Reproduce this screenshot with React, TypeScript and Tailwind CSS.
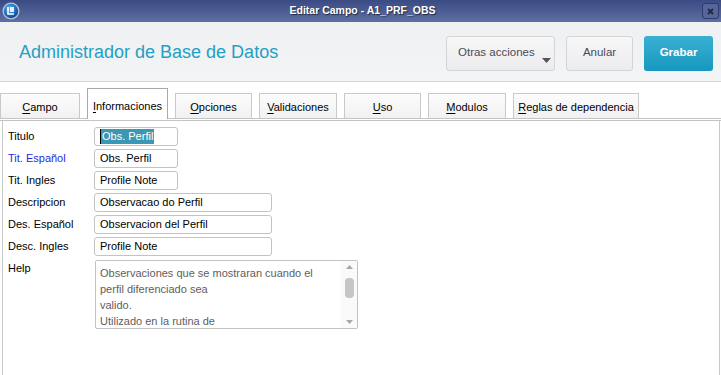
import React from "react";

const U = ({ t }: { t: string }) => (
  <span className="whitespace-nowrap">
    <span className="underline underline-offset-2">{t[0]}</span>
    {t.slice(1)}
  </span>
);

const tabs = [
  { k: "Campo", w: "w-[80px]" },
  { k: "Informaciones", w: "w-[81px]", active: true },
  { k: "Opciones", w: "w-[77px]" },
  { k: "Validaciones", w: "w-[78px]" },
  { k: "Uso", w: "w-[77px]" },
  { k: "Modulos", w: "w-[78px]" },
  { k: "Reglas de dependencia", w: "w-[126px]" },
];

const rows = [
  { l: "Titulo", v: "Obs. Perfil", w: "w-[84px]", sel: true },
  { l: "Tit. Español", v: "Obs. Perfil", w: "w-[84px]", blue: true },
  { l: "Tit. Ingles", v: "Profile Note", w: "w-[84px]" },
  { l: "Descripcion", v: "Observacao do Perfil", w: "w-[178px]" },
  { l: "Des. Español", v: "Observacion del Perfil", w: "w-[178px]" },
  { l: "Desc. Ingles", v: "Profile Note", w: "w-[178px]" },
];

export default function App() {
  return (
    <div
      className="w-[721px] h-[375px] overflow-hidden bg-white flex flex-col text-[11px] text-black"
      style={{ fontFamily: '"Liberation Sans", Arial, sans-serif' }}
    >
      {/* title bar */}
      <div className="h-[22px] shrink-0 flex items-center justify-between px-[2px] bg-gradient-to-b from-[#3a4b84] to-[#5f6fa3]">
        <svg width="18" height="18" viewBox="0 0 18 18">
          <defs>
            <radialGradient id="g1" cx="40%" cy="35%" r="70%">
              <stop offset="0%" stopColor="#6fb6f0" />
              <stop offset="60%" stopColor="#1d6fc0" />
              <stop offset="100%" stopColor="#0c3f86" />
            </radialGradient>
          </defs>
          <circle cx="9" cy="9" r="8.5" fill="#b9c4d8" />
          <circle cx="9" cy="9" r="7.2" fill="url(#g1)" />
          <path d="M6 5 L6 12 L12 12" stroke="#ffffff" strokeWidth="1.6" fill="none" />
          <rect x="8" y="5" width="4" height="5" fill="#ffffff" opacity="0.85" />
        </svg>
        <div className="text-white font-bold text-[10.5px] [text-shadow:1px_1px_1px_rgba(0,0,0,0.6)] ml-[3px]">
          Editar Campo - A1_PRF_OBS
        </div>
        <div className="w-[17px] h-[16px] rounded-[3px] border border-[#2e3c6a] bg-[#56659a] flex items-center justify-center">
          <svg width="7" height="7" viewBox="0 0 7 7">
            <path d="M1 1 L6 6 M6 1 L1 6" stroke="#1e2848" strokeWidth="1.8" />
          </svg>
        </div>
      </div>

      {/* header */}
      <div className="h-[60px] shrink-0 flex items-center justify-between bg-gradient-to-b from-[#eef0f2] to-[#f3f4f5] border-b border-[#d6d7d9] pl-[19px] pr-[8px]">
        <div className="text-[18px] text-[#1fa0c6] mt-[1px]">Administrador de Base de Datos</div>
        <div className="flex items-center gap-[11px] mt-[3px]">
          <div className="relative w-[109px] h-[35px] rounded-[3px] border border-[#d3d4d6] bg-gradient-to-b from-[#f7f7f8] to-[#ececee] flex items-center pl-[11px] text-[11.5px] text-[#4a4a55]">
            Otras acciones
            <svg className="absolute right-[3px] bottom-[7px]" width="9" height="5" viewBox="0 0 9 5">
              <path d="M0 0 L9 0 L4.5 5 Z" fill="#555" />
            </svg>
          </div>
          <div className="w-[67px] h-[35px] rounded-[3px] border border-[#d3d4d6] bg-gradient-to-b from-[#f7f7f8] to-[#ececee] flex items-center justify-center text-[11.5px] text-[#4a4a55]">
            Anular
          </div>
          <div className="w-[69px] h-[35px] rounded-[3px] bg-gradient-to-b from-[#39b0d2] to-[#1498bf] flex items-center justify-center text-white text-[11.5px] font-bold">
            Grabar
          </div>
        </div>
      </div>

      {/* tabs */}
      <div className="h-[36px] shrink-0 flex items-end gap-[7px] pl-0 relative">
        {tabs.map((t) =>
          t.active ? (
            <div
              key={t.k}
              className={`${t.w} h-[31px] border border-[#a9a9a9] border-b-0 bg-white flex items-start justify-center pt-[9px] relative z-10 -mb-[1px]`}
            >
              <U t={t.k} />
            </div>
          ) : (
            <div
              key={t.k}
              className={`${t.w} h-[25px] border border-[#c9c9c9] border-b-0 bg-gradient-to-b from-[#fcfcfc] to-[#f1f1f1] flex items-center justify-center pt-[2px]`}
            >
              <U t={t.k} />
            </div>
          )
        )}
      </div>

      {/* content panel */}
      <div className="flex-1 border-t-[3px] border-double border-[#c4c4c4]">
        <div className="h-full ml-[2px] mr-[1px] border-l border-r border-[#c9c9c9] pt-[6px] pl-[5px]">
          <div className="flex flex-col gap-[3px]">
            {rows.map((r) => (
              <div key={r.l} className="flex items-center h-[19px]">
                <div className={`w-[86px] ${r.blue ? "text-[#2a2ae0]" : "text-black"}`}>{r.l}</div>
                <div
                  className={`${r.w} h-[19px] border border-[#c3c3c3] rounded-[3px] bg-white flex items-center pl-[5px]`}
                >
                  {r.sel ? (
                    <span className="bg-[#3b98b4] text-white pl-[1px] pr-[1px] leading-[15px] border-l border-black">
                      {r.v}
                    </span>
                  ) : (
                    r.v
                  )}
                </div>
              </div>
            ))}
            <div className="flex items-start mt-[1px]">
              <div className="w-[87px]">Help</div>
              <div className="w-[263px] h-[69px] border border-[#c3c3c3] rounded-[2px] bg-white flex">
                <div className="flex-1 pl-[4px] pt-[4px] text-[#5e5e5e] leading-[16px]">
                  Observaciones que se mostraran cuando el
                  <br />
                  perfil diferenciado sea
                  <br />
                  valido.
                  <br />
                  Utilizado en la rutina de
                </div>
                <div className="w-[16px] flex flex-col items-center justify-between py-[4px] bg-[#fafafa]">
                  <svg width="7" height="4" viewBox="0 0 7 4">
                    <path d="M0 4 L7 4 L3.5 0 Z" fill="#a8a8a8" />
                  </svg>
                  <div className="w-[9px] h-[20px] rounded-[4px] bg-[#c6c6c6] -mt-[14px]" />
                  <svg width="7" height="4" viewBox="0 0 7 4">
                    <path d="M0 0 L7 0 L3.5 4 Z" fill="#a8a8a8" />
                  </svg>
                </div>
              </div>
            </div>
          </div>
        </div>
      </div>
    </div>
  );
}
